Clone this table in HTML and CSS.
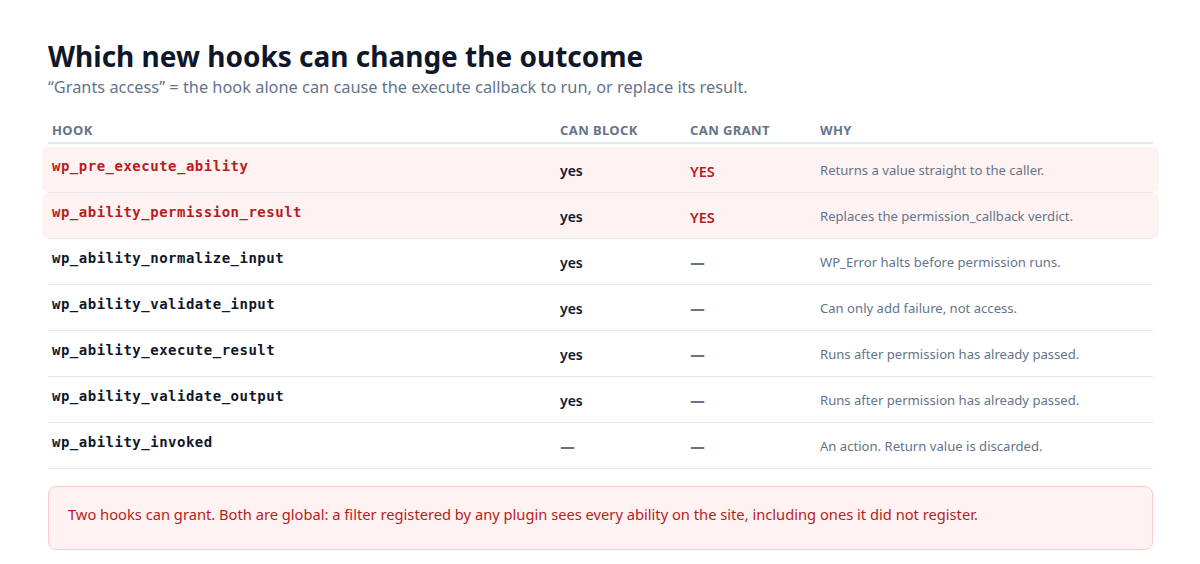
FILE: index.html
```html
<!DOCTYPE html>
<html lang="en">
<head>
<meta charset="utf-8">
<title>Which new hooks can change the outcome</title>
<link rel="stylesheet" href="styles.css">
</head>
<body>
<main class="page">
  <h1 class="title">Which new hooks can change the outcome</h1>
  <p class="subtitle">“Grants access” = the hook alone can cause the execute callback to run, or replace its result.</p>

  <div class="table">
    <div class="thead">
      <div class="th">Hook</div>
      <div class="th">Can block</div>
      <div class="th">Can grant</div>
      <div class="th">Why</div>
    </div>
    <div class="tbody">
      <div class="row hl">
        <div class="cells">
          <div class="hook"><code>wp_pre_execute_ability</code></div>
          <div class="val">yes</div>
          <div class="val grant">YES</div>
          <div class="why">Returns a value straight to the caller.</div>
        </div>
      </div>
      <div class="row hl">
        <div class="cells">
          <div class="hook"><code>wp_ability_permission_result</code></div>
          <div class="val">yes</div>
          <div class="val grant">YES</div>
          <div class="why">Replaces the permission_callback verdict.</div>
        </div>
      </div>
      <div class="row">
        <div class="cells">
          <div class="hook"><code>wp_ability_normalize_input</code></div>
          <div class="val">yes</div>
          <div class="val"><span class="dash">—</span></div>
          <div class="why">WP_Error halts before permission runs.</div>
        </div>
      </div>
      <div class="row">
        <div class="cells">
          <div class="hook"><code>wp_ability_validate_input</code></div>
          <div class="val">yes</div>
          <div class="val"><span class="dash">—</span></div>
          <div class="why">Can only add failure, not access.</div>
        </div>
      </div>
      <div class="row">
        <div class="cells">
          <div class="hook"><code>wp_ability_execute_result</code></div>
          <div class="val">yes</div>
          <div class="val"><span class="dash">—</span></div>
          <div class="why">Runs after permission has already passed.</div>
        </div>
      </div>
      <div class="row">
        <div class="cells">
          <div class="hook"><code>wp_ability_validate_output</code></div>
          <div class="val">yes</div>
          <div class="val"><span class="dash">—</span></div>
          <div class="why">Runs after permission has already passed.</div>
        </div>
      </div>
      <div class="row">
        <div class="cells">
          <div class="hook"><code>wp_ability_invoked</code></div>
          <div class="val"><span class="dash">—</span></div>
          <div class="val"><span class="dash">—</span></div>
          <div class="why">An action. Return value is discarded.</div>
        </div>
      </div>
    </div>
  </div>

  <div class="callout">Two hooks can grant. Both are global: a filter registered by any plugin sees every ability on the site, including ones it did not register.</div>
</main>
</body>
</html>
```
FILE: styles.css
```css
* { box-sizing: border-box; }

html, body {
  margin: 0;
  background: #ffffff;
}

body {
  font-family: "Noto Sans", "Open Sans", sans-serif;
  color: #0f172a;
}

.page {
  width: 1105px;
  margin-left: 48px;
  padding-top: 39px;
}

.title {
  margin: 0;
  font-size: 28px;
  line-height: 34px;
  font-weight: 700;
  color: #0f172a;
}

.subtitle {
  margin: 3px 0 0;
  font-size: 16.35px;
  line-height: 22px;
  color: #64748b;
}

.table {
  margin-top: 16px;
}

.thead,
.cells {
  display: grid;
  grid-template-columns: 508px 130px 130px 1fr;
}

.thead {
  border-bottom: 2px solid #e2e8f0;
}

.th {
  padding: 8px 4px 4px;
  font-size: 13px;
  line-height: 16px;
  font-weight: 700;
  letter-spacing: 0.4px;
  text-transform: uppercase;
  color: #64748b;
}

.tbody {
  padding-top: 3px;
}

.row {
  border-bottom: 1px solid #e2e8f0;
}

.cells {
  height: 45px;
  align-items: center;
}

.row.hl .cells {
  margin: 0 -6px;
  padding: 0 6px;
  background: #fef2f2;
  border-radius: 6px;
}

.hook {
  padding: 0 4px 10px;
}

.hook code {
  font-family: "DejaVu Sans Mono", "Liberation Mono", monospace;
  font-size: 14px;
  line-height: 18px;
  letter-spacing: 0.5px;
  font-weight: 700;
  color: #0f172a;
}

.row.hl .hook code {
  color: #b91c1c;
}

.val {
  padding: 3px 4px 0;
  font-size: 14px;
  line-height: 18px;
  font-weight: 600;
  color: #0f172a;
}

.val.grant {
  font-size: 14.5px;
  color: #b91c1c;
}

.dash {
  font-family: "DejaVu Sans", "Noto Sans", sans-serif;
  font-size: 15px;
  font-weight: 700;
  color: #64748b;
}

.why {
  padding: 1px 4px 0;
  font-size: 13.1px;
  line-height: 18px;
  color: #64748b;
}

.callout {
  margin-top: 17px;
  padding: 16px 19px 24px;
  border: 1px solid #fecaca;
  border-radius: 8px;
  background: #fef2f2;
  font-size: 14.7px;
  line-height: 22px;
  color: #b91c1c;
}
```
